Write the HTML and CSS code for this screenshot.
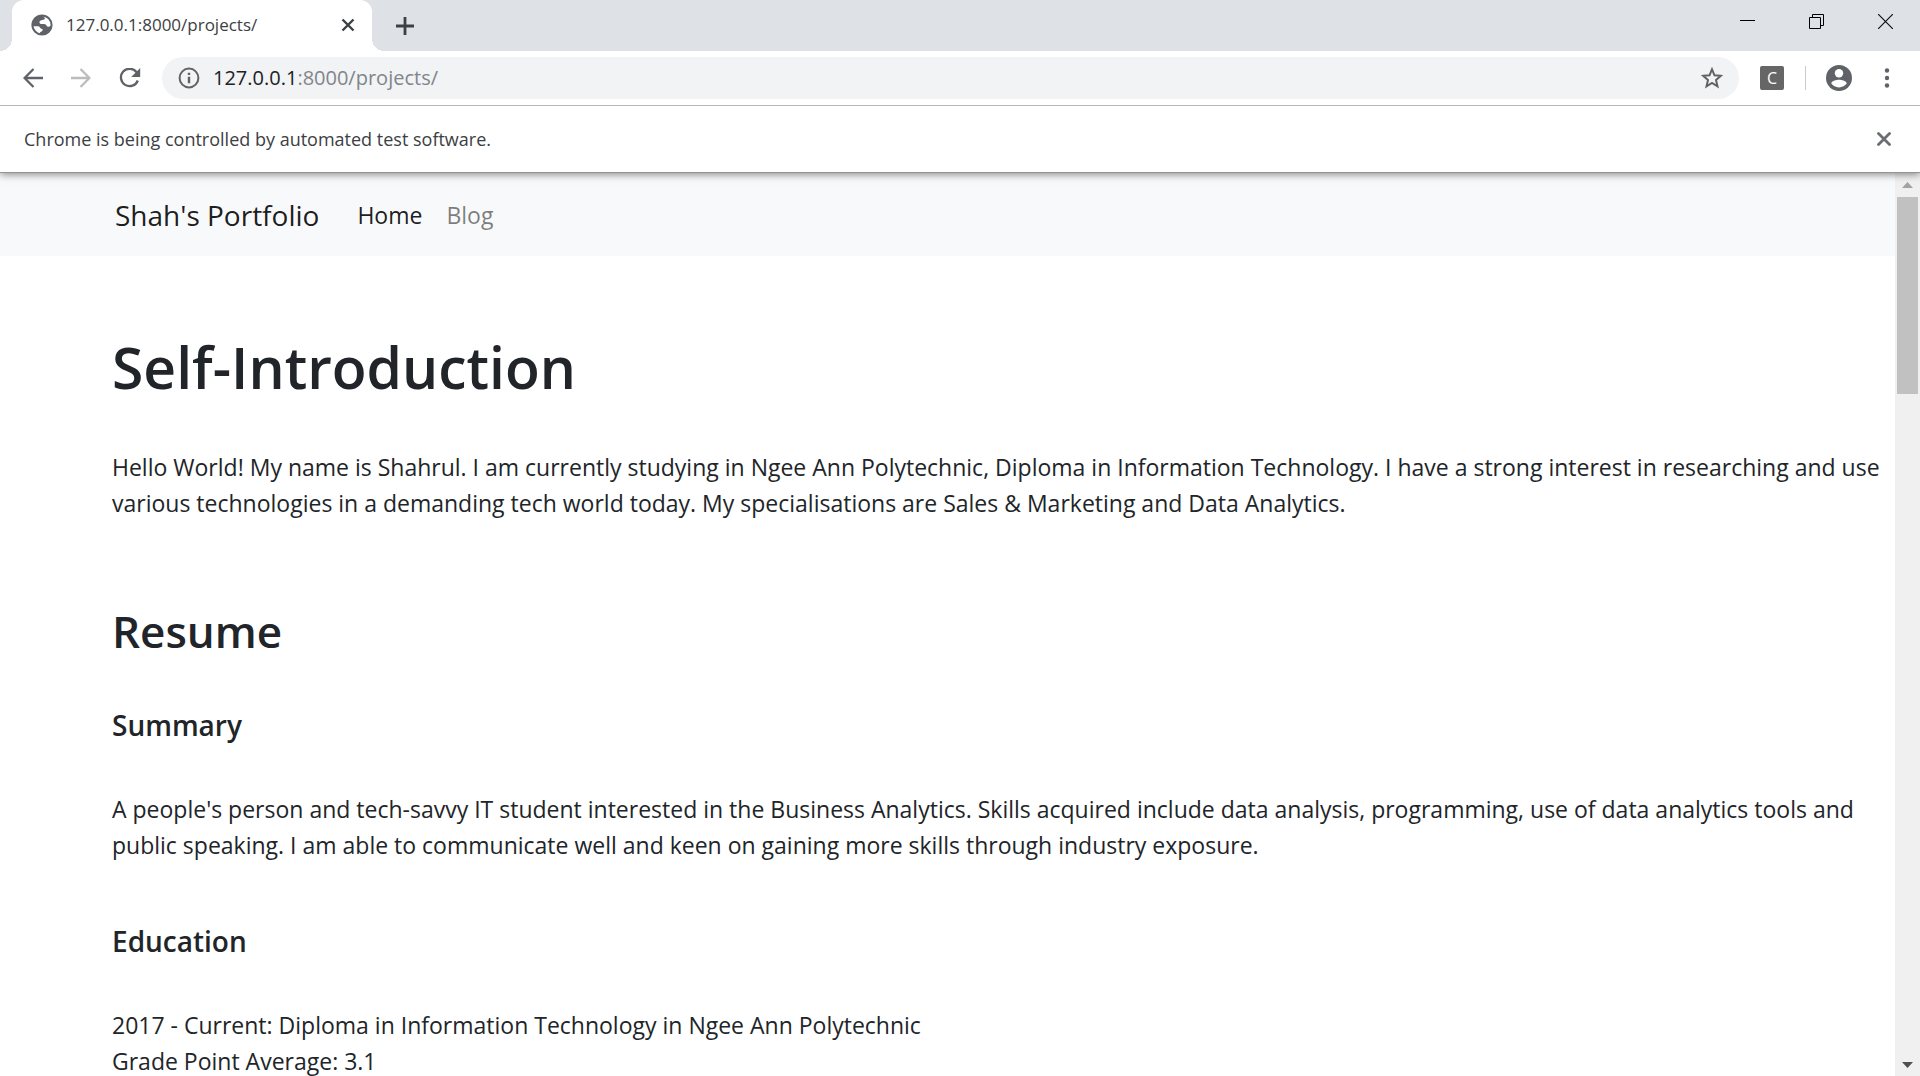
FILE: index.html
```html
<!DOCTYPE html>
<html lang="en">
<head>
<meta charset="utf-8">
<title>127.0.0.1:8000/projects/</title>
<link rel="stylesheet" href="styles.css">
</head>
<body>
<header class="browser">
  <div class="tabstrip">
    <div class="tab">
      <svg class="tab-icon" width="22" height="22" viewBox="0 0 22 22"><circle cx="11" cy="11" r="9.6" fill="#fff" stroke="#5f6368" stroke-width="2"/><path fill="#5f6368" d="M12 1.5C6.500 1 1 5.500 1 11.500c1.500 1.200 4 .6 6.300.8 2 .2 1.500 2.200 3 2.500 1.600.3 1.700 1 .9 2.100-.7 1-2.700.8-2.500 2.600l2.700 1.200c5.300 0 9.600-4.300 9.600-9.700-1.600.4-1.900 2-3.700 1.800-2-.2-1.300-2.100-3.300-2.600-2.200-.5-4.900.3-5.500-1.500-.5-1.800 1.600-2.300 2.800-2.600 1.300-.3 3-.3 2.500-2-.4-1-1.700-.8-1.800-2.600z"/></svg>
      <span class="tab-title">127.0.0.1:8000/projects/</span>
      <button class="icon-btn" aria-label="Close tab"><svg width="14" height="14" viewBox="0 0 14 14"><path d="M1.500 1.500l11 11M12.500 1.500l-11 11" stroke="#3c4043" stroke-width="2.400"/></svg></button>
    </div>
    <button class="icon-btn new-tab" aria-label="New tab"><svg width="18" height="18" viewBox="0 0 18 18"><path d="M9 0v18M0 9h18" stroke="#3c4043" stroke-width="2.800"/></svg></button>
    <div class="window-controls">
      <button class="icon-btn" aria-label="Minimize"><svg width="15" height="15" viewBox="0 0 15 15"><path d="M0 6.500h15" stroke="#000"/></svg></button>
      <button class="icon-btn" aria-label="Restore"><svg width="15" height="15" viewBox="0 0 15 15"><path d="M.5 3.500h11v11H.5zM3.500 3.500v-3h11v11h-3" fill="none" stroke="#000"/></svg></button>
      <button class="icon-btn" aria-label="Close window"><svg width="15" height="15" viewBox="0 0 15 15"><path d="M0 0l15 15M15 0L0 15" stroke="#111" stroke-width="1.200"/></svg></button>
    </div>
  </div>
  <div class="toolbar">
    <div class="nav-buttons">
      <button class="icon-btn" aria-label="Back"><svg width="20" height="20" viewBox="0 0 20 20"><path d="M20 10H2M10.500 1L1.600 10l8.900 9" fill="none" stroke="#5f6368" stroke-width="2.300"/></svg></button>
      <button class="icon-btn" aria-label="Forward"><svg width="20" height="20" viewBox="0 0 20 20"><path d="M0 10h18M9.500 1l8.900 9-8.900 9" fill="none" stroke="#babcbe" stroke-width="2.300"/></svg></button>
      <button class="icon-btn" aria-label="Reload"><svg width="22" height="20" viewBox="0 0 22 20"><path d="M17.600 4.200A8.700 8.700 0 1 0 18.800 12.500" fill="none" stroke="#5f6368" stroke-width="2.300"/><path d="M21.200 0v9h-9z" fill="#5f6368"/></svg></button>
    </div>
    <div class="omnibox">
      <svg width="22" height="22" viewBox="0 0 22 22"><circle cx="11" cy="11" r="9.400" fill="none" stroke="#5f6368" stroke-width="2"/><path d="M11 5.800v2.300M11 9.800v6.400" stroke="#5f6368" stroke-width="2.400"/></svg>
      <div class="url"><span class="host">127.0.0.1</span>:8000/projects/</div>
      <button class="icon-btn" aria-label="Bookmark this page"><svg width="22" height="22" viewBox="0 0 22 22"><path d="M11 2.300l2.500 6 6.300.5-4.800 4.200 1.500 6.300L11 15.900l-5.500 3.400L7 13 2.200 8.800l6.300-.5z" fill="none" stroke="#5f6368" stroke-width="2"/></svg></button>
    </div>
    <button class="extension" aria-label="Extension">C</button>
    <span class="separator"></span>
    <button class="icon-btn profile" aria-label="Profile"><svg width="26" height="26" viewBox="0 0 26 26"><circle cx="13" cy="13" r="13" fill="#5f6368"/><circle cx="13" cy="8.300" r="4.200" fill="#fff"/><path d="M5.200 18.200c1.200-2.600 5.200-3.400 7.800-3.400s6.600.8 7.800 3.400a9.300 9.300 0 0 1-15.600 0z" fill="#fff"/></svg></button>
    <button class="icon-btn menu" aria-label="Menu"><svg width="6" height="20" viewBox="0 0 6 20"><g fill="#5f6368"><circle cx="3" cy="2.500" r="2.200"/><circle cx="3" cy="10" r="2.200"/><circle cx="3" cy="17.500" r="2.200"/></g></svg></button>
  </div>
  <div class="infobar">
    <span>Chrome is being controlled by automated test software.</span>
    <button class="icon-btn" aria-label="Dismiss"><svg width="14" height="14" viewBox="0 0 14 14"><path d="M1.500 1.500l11 11M12.500 1.500l-11 11" stroke="#6a6d71" stroke-width="2.800" stroke-linecap="round"/></svg></button>
  </div>
</header>
<div class="viewport">
  <div class="page">
    <nav class="navbar">
      <a class="brand" href="#">Shah's Portfolio</a>
      <a class="nav-link active" href="#">Home</a>
      <a class="nav-link" href="#">Blog</a>
    </nav>
    <main class="content">
      <h1>Self-Introduction</h1>
      <p>Hello World! My name is Shahrul. I am currently studying in Ngee Ann Polytechnic, Diploma in Information Technology. I have a strong interest in researching and use various technologies in a demanding tech world today. My specialisations are Sales &amp; Marketing and Data Analytics.</p>
      <h2>Resume</h2>
      <h3>Summary</h3>
      <p>A people's person and tech-savvy IT student interested in the Business Analytics. Skills acquired include data analysis, programming, use of data analytics tools and public speaking. I am able to communicate well and keen on gaining more skills through industry exposure.</p>
      <h3>Education</h3>
      <p>2017 - Current: Diploma in Information Technology in Ngee Ann Polytechnic<br>Grade Point Average: 3.1</p>
    </main>
  </div>
  <div class="scrollbar">
    <svg width="11" height="6" viewBox="0 0 11 6"><path d="M5.500 0L11 6H0z" fill="#a3a3a3"/></svg>
    <div class="track"><div class="thumb"></div></div>
    <svg width="11" height="6" viewBox="0 0 11 6"><path d="M0 0h11L5.500 6z" fill="#505050"/></svg>
  </div>
</div>
</body>
</html>
```
FILE: styles.css
```css
* { box-sizing: border-box; }
body {
  margin: 0;
  height: 100vh;
  display: flex;
  flex-direction: column;
  overflow: hidden;
  background: #fff;
  color: #212529;
  font-family: "Open Sans", "Noto Sans", sans-serif;
  font-size: 23px;
  line-height: 36px;
}
svg { display: block; flex: none; }
a { color: inherit; text-decoration: none; }
.icon-btn { padding: 0; border: 0; background: none; display: block; flex: none; }

.tabstrip {
  display: flex;
  height: 51px;
  padding-left: 12px;
  background: #dee1e6;
}
.tab {
  position: relative;
  display: flex;
  align-items: center;
  width: 360px;
  padding: 0 17px 2px 19px;
  gap: 13px;
  border-radius: 12px 12px 0 0;
  background: #fff;
}
.tab::before, .tab::after {
  content: "";
  position: absolute;
  bottom: 0;
  width: 12px;
  height: 12px;
}
.tab::before { right: 100%; background: radial-gradient(circle at 0 0, #dee1e6 12px, #fff 12px); }
.tab::after { left: 100%; background: radial-gradient(circle at 100% 0, #dee1e6 12px, #fff 12px); }
.tab-title { flex: 1; font-size: 17px; line-height: 24px; color: #3c4043; }
.new-tab { margin-left: 24px; }
.window-controls {
  display: flex;
  gap: 54px;
  margin-left: auto;
  padding: 14px 27px 0 0;
  align-items: flex-start;
}

.toolbar {
  position: relative;
  z-index: 2;
  display: flex;
  align-items: center;
  height: 55px;
  padding: 0 30px 0 23px;
  border-bottom: 1px solid #b6b6b6;
  background: #fff;
}
.nav-buttons { display: flex; gap: 28px; margin-right: 21px; }
.omnibox {
  flex: 1;
  display: flex;
  align-items: center;
  height: 42px;
  padding: 0 16px;
  border-radius: 21px;
  background: #f1f3f4;
}
.url { flex: 1; margin-left: 13px; font-size: 20px; line-height: 28px; color: #80868b; }
.host { color: #202124; }
.extension {
  width: 24px;
  height: 24px;
  margin: 0 21px;
  padding: 0;
  border: 0;
  border-radius: 2px;
  background: #666;
  color: #fff;
  font: 16px/24px "Open Sans", sans-serif;
}
.separator { width: 1px; height: 24px; background: #c8cacd; }
.profile { margin: 0 32px 0 20px; }

.infobar {
  position: relative;
  display: flex;
  align-items: center;
  justify-content: space-between;
  height: 67px;
  padding: 0 29px 0 24px;
  border-bottom: 1px solid #949494;
  font-size: 18px;
  color: #3c4043;
  box-shadow: 0 1px 8px rgba(0, 0, 0, .5);
}

.viewport { flex: 1; display: flex; min-height: 0; }
.page { flex: 1; min-width: 0; overflow: hidden; }
.navbar {
  display: flex;
  align-items: center;
  height: 83px;
  padding-left: 115px;
  background: #f8f9fa;
}
.brand { margin-right: 38px; font-size: 28px; color: rgba(0, 0, 0, .9); }
.nav-link { margin-right: 24px; color: rgba(0, 0, 0, .5); }
.nav-link.active { color: rgba(0, 0, 0, .9); }

.content { padding: 75px 12px 0 112px; }
h1, h2, h3, p { margin: 0; }
h1, h2, h3 { font-weight: 600; }
h1 { margin-bottom: 46px; font-size: 57px; line-height: 72px; }
h2 { margin-bottom: 46px; font-size: 44px; line-height: 60px; }
h3 { margin-bottom: 48px; font-size: 28px; line-height: 36px; }
p { margin-bottom: 80px; }
h3 + p { margin-bottom: 60px; }

.scrollbar {
  display: flex;
  flex-direction: column;
  align-items: center;
  gap: 9px;
  width: 25px;
  padding: 9px 2px 8px;
  background: #f0f0f0;
}
.track { flex: 1; width: 100%; }
.thumb { height: 23%; background: #c1c1c1; }
```
